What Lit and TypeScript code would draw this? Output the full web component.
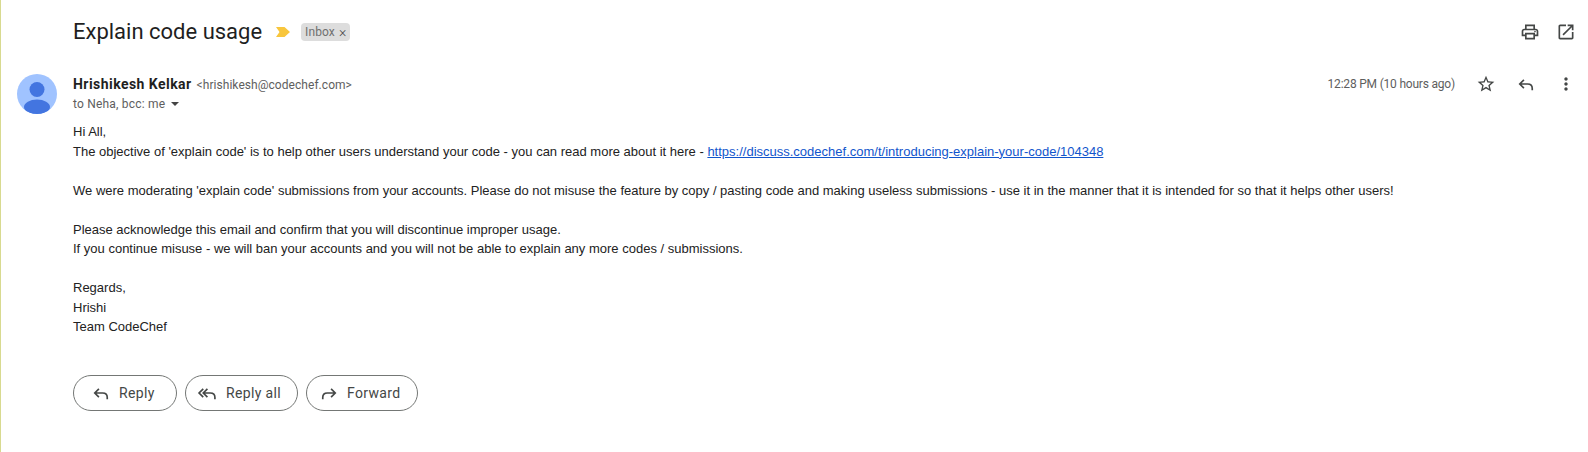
import { LitElement, html, css, svg } from "lit";
import { customElement } from "lit/decorators.js";

const icon = (d: string, size = 20, vb = 24) => html`<svg class="ic" width=${size} height=${size} viewBox="0 0 ${vb} ${vb}" fill="currentColor">${svg`<path d=${d}></path>`}</svg>`;
const line = (d: string) => html`<svg class="ic ln" width="20" height="20" viewBox="0 0 24 24">${svg`<path d=${d}></path>`}</svg>`;

const P = {
  print: "M19 8h-1V3H6v5H5c-1.66 0-3 1.34-3 3v6h4v4h12v-4h4v-6c0-1.66-1.34-3-3-3zM8 5h8v3H8V5zm8 14H8v-4h8v4zm2-4v-2H6v2H4v-4c0-.55.45-1 1-1h14c.55 0 1 .45 1 1v4h-2z M18 10.500a1 1 0 1 1 0 2 1 1 0 0 1 0-2z",
  open: "M19 19H5V5h7V3H5c-1.11 0-2 .9-2 2v14c0 1.1.89 2 2 2h14c1.1 0 2-.9 2-2v-7h-2v7zM14 3v2h3.59l-9.83 9.83 1.41 1.41L19 6.41V10h2V3h-7z",
  star: "M22 9.24l-7.19-.62L12 2 9.19 8.63 2 9.24l5.46 4.73L5.82 21 12 17.27 18.18 21l-1.63-7.03L22 9.24zM12 15.4l-3.76 2.27 1-4.28-3.32-2.88 4.38-.38L12 6.1l1.71 4.04 4.38.38-3.32 2.88 1 4.28L12 15.4z",
  reply: "M9.500 7 L4.500 12 L9.500 17 M4.500 12 H14 C17.500 12 19.500 14 19.500 17.500 V19.500",
  forward: "M14.500 7 L19.500 12 L14.500 17 M19.500 12 H10 C6.500 12 4.500 14 4.500 17.500 V19.500",
  replyAll: "M7.500 7 L2.500 12 L7.500 17 M12.500 7 L7.500 12 L12.500 17 M7.500 12 H16 C19.500 12 21.500 14 21.500 17.500 V19.500",
  more: "M12 8c1.1 0 2-.9 2-2s-.9-2-2-2-2 .9-2 2 .9 2 2 2zm0 2c-1.1 0-2 .9-2 2s.9 2 2 2 2-.9 2-2-.9-2-2-2zm0 6c-1.1 0-2 .9-2 2s.9 2 2 2 2-.9 2-2-.9-2-2-2z",
};

@customElement("app-root")
export class AppRoot extends LitElement {
  static styles = css`
    :host { display: block; height: 452px; box-sizing: border-box; background: #fff; border-left: 1px solid #d8da90; font-family: Roboto, sans-serif; color: #222; overflow: hidden; }
    .ic { display: block; flex: none; }
    .ln { fill: none; stroke: currentColor; stroke-width: 2; }
    .head { display: flex; align-items: center; height: 64px; padding-left: 72px; padding-right: 12px; }
    h1 { margin: 0; font: 400 22px/28px Roboto, sans-serif; color: #1f1f1f; }
    .marker { margin-left: 14px; width: 14px; height: 10px; flex: none; }
    .chip { margin-left: 11px; display: flex; align-items: center; gap: 4px; height: 18px; padding: 0 4px; background: #ddd; border-radius: 4px; font-size: 12px; letter-spacing: .1px; color: #707070; }
    .chip i { font: normal 300 14px Roboto, sans-serif; color: #444; }
    .head-icons { margin-left: auto; display: flex; gap: 16px; color: #444746; }
    .msg { display: flex; padding-left: 16px; margin-top: 10px; }
    .avatar { width: 40px; height: 40px; flex: none; margin-right: 16px; }
    .main { flex: 1; min-width: 0; }
    .sender { display: flex; align-items: flex-start; height: 46px; padding-right: 12px; }
    .who { flex: 1; }
    .line1 { height: 18px; display: flex; align-items: baseline; padding-top: 2px; }
    .name { font-size: 14px; font-weight: 700; color: #1f1f1f; letter-spacing: .45px; }
    .addr { font-size: 12px; color: #5e5e5e; margin-left: 5px; letter-spacing: .05px; }
    .to { display: flex; align-items: center; gap: 5px; font-size: 12px; letter-spacing: .2px; color: #5e5e5e; height: 20px; }
    .caret { width: 0; height: 0; border: 4px solid transparent; border-top: 4.500px solid #444; border-bottom: 0; margin-left: 1px; }
    .time { font-size: 12px; color: #5e5e5e; letter-spacing: -.2px; padding-top: 3px; margin-right: 21px; }
    .acts { display: flex; align-items: center; gap: 20px; color: #444746; }
    .body { font: 13px/19.5px "Liberation Sans", Arial, sans-serif; color: #222; padding-top: 2px; }
    .body a { color: #1155cc; }
    .gap { height: 19.5px; }
    .btns { display: flex; gap: 8px; margin-top: 38px; }
    .btn { display: flex; align-items: center; height: 36px; box-sizing: border-box; border: 1px solid #747775; border-radius: 18px; background: #fff; color: #444746; font: 450 14px Roboto, sans-serif; letter-spacing: .35px; gap: 9px; }
    .r { width: 104px; padding-left: 17px; gap: 8px; }
    .a { width: 113px; padding-left: 11px; }
    .f { width: 112px; padding-left: 12px; gap: 8px; }
  `;

  render() {
    return html`
      <div class="head">
        <h1>Explain code usage</h1>
        <svg class="marker" viewBox="0 0 14 10"><path d="M0 0h8.500L14 5l-5.500 5H0l3.500-5z" fill="#f8c63d"></path></svg>
        <span class="chip">Inbox <i>×</i></span>
        <div class="head-icons">${icon(P.print)}${icon(P.open)}</div>
      </div>
      <div class="msg">
        <svg class="avatar" viewBox="0 0 40 40">
          <defs><clipPath id="c"><circle cx="20" cy="20" r="20"></circle></clipPath></defs>
          <circle cx="20" cy="20" r="20" fill="#a0c3ff"></circle>
          <g clip-path="url(#c)" fill="#4375e0">
            <circle cx="20" cy="15.500" r="7.500"></circle>
            <ellipse cx="20" cy="33" rx="13" ry="7.500"></ellipse>
          </g>
        </svg>
        <div class="main">
          <div class="sender">
            <div class="who">
              <div class="line1"><span class="name">Hrishikesh Kelkar</span><span class="addr">&lt;hrishikesh@codechef.com&gt;</span></div>
              <div class="to">to Neha, bcc: me <span class="caret"></span></div>
            </div>
            <span class="time">12:28 PM (10 hours ago)</span>
            <div class="acts">${icon(P.star)}${line(P.reply)}${icon(P.more)}</div>
          </div>
          <div class="body">
            <div>Hi All,</div>
            <div>The objective of 'explain code' is to help other users understand your code - you can read more about it here - <a href="#">https://discuss.codechef.com/t/introducing-explain-your-code/104348</a></div>
            <div class="gap"></div>
            <div>We were moderating 'explain code' submissions from your accounts. Please do not misuse the feature by copy / pasting code and making useless submissions - use it in the manner that it is intended for so that it helps other users!</div>
            <div class="gap"></div>
            <div>Please acknowledge this email and confirm that you will discontinue improper usage.</div>
            <div>If you continue misuse - we will ban your accounts and you will not be able to explain any more codes / submissions.</div>
            <div class="gap"></div>
            <div>Regards,</div>
            <div>Hrishi</div>
            <div>Team CodeChef</div>
          </div>
          <div class="btns">
            <div class="btn r">${line(P.reply)}Reply</div>
            <div class="btn a">${line(P.replyAll)}Reply all</div>
            <div class="btn f">${line(P.forward)}Forward</div>
          </div>
        </div>
      </div>
    `;
  }
}
